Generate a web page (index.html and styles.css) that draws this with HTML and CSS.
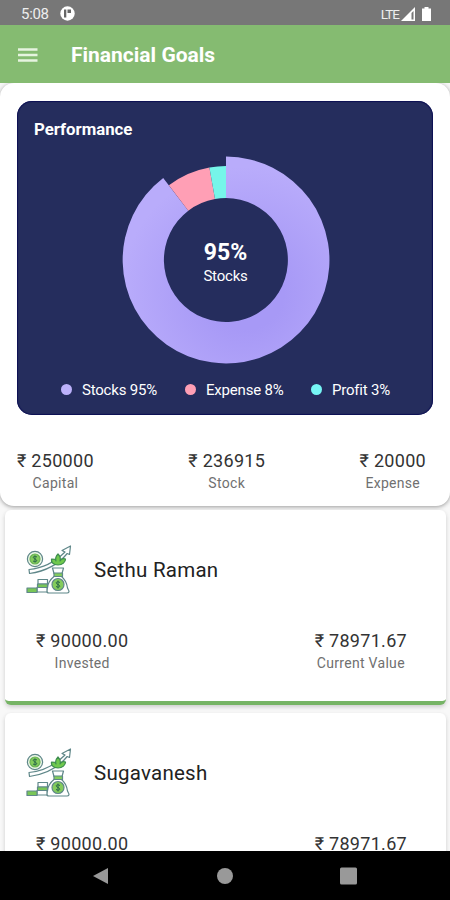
FILE: index.html
```html
<!DOCTYPE html>
<html lang="en">
<head>
<meta charset="utf-8">
<title>Financial Goals</title>
<link rel="stylesheet" href="styles.css">
</head>
<body>
<svg class="defs" width="0" height="0" aria-hidden="true">
  <symbol id="invest" viewBox="0 0 48 50">
    <g fill="none" stroke="#5f8789" stroke-width="1.200" stroke-linejoin="round">
      <circle cx="9" cy="14" r="7.600" fill="#edf8e8"/>
      <circle cx="9" cy="14" r="5" fill="#83cc5c" stroke="#69b256"/>
      <path d="M3 24.500C14 23.500 27 19 39 7l-3-1.500L44.500 1l-1 8.500-2.300-1C31 21 18 26.500 3.500 28.500z" fill="#fff"/>
      <path d="M32 20c-5 0-7-3-6.500-6 3 0 4 0 4.500 2-1-3 0-5 2-7 2 2 3 4 2 7 1-2 3-3 5.500-2 0 3-3 6-7.500 6z" fill="#70c94d" stroke="#3e8d50"/>
      <path d="M28 28.500l-1.500-5.500h11l-1.500 5.500z" fill="#fff"/>
      <path d="M28 28h8.500v3.500H28z" fill="#83cc5c"/>
      <path d="M28 31.500c-4 3-6.500 8-6.500 11l-1 3c0 2 1 2.500 2.500 2.500h18c2 0 2.500-1.500 1.500-3l-1-2c-.5-4-3-9-6-11.500z" fill="#fff"/>
      <circle cx="32" cy="39.500" r="6" fill="#83cc5c"/>
      <path d="M12 34.500h9.500V39H12z" fill="#fff"/>
      <path d="M11.500 39h10v3.500h-10z" fill="#79c657"/>
      <path d="M11 42.500h10V47H11z" fill="#fff"/>
      <path d="M1 43h10v4.500H1z" fill="#79c657"/>
    </g>
    <g fill="none" stroke="#286749" stroke-width="1">
      <path d="M11 12c-4-2-5 1-2 2s2 4-2 2M9 10.500v7M34 37.500c-4-2-5 1-2 2s2 4-2 2M32 35.500v8"/>
    </g>
  </symbol>
</svg>
<div class="phone">
  <header class="status">
    <span class="time">5:08</span>
    <svg class="app-dot" viewBox="0 0 15 15"><circle cx="7.500" cy="7.500" r="7.200" fill="#fff"/><path d="M4 3.500h2.300v8H4zM7.500 3.500H11v3.500H7.500z" fill="#666"/></svg>
    <span class="lte">LTE</span>
    <svg class="signal" viewBox="0 0 15 14"><path d="M0 14L14 0v14z" fill="#fff"/><path d="M10.500 6l2-2v8.500h-2z" fill="#777"/></svg>
    <svg class="battery" viewBox="0 0 9 14"><path d="M2.500 0h4v1.500H9V14H0V1.500h2.500z" fill="#fff"/></svg>
  </header>
  <div class="appbar">
    <svg class="menu" viewBox="0 0 20 14"><path d="M0 1.500h19.500M0 7h19.500M0 12.500h19.500" stroke="#e6f4df" stroke-width="2.600"/></svg>
    <h1>Financial Goals</h1>
  </div>
  <main class="content">
    <section class="summary">
      <div class="performance">
        <h2>Performance</h2>
        <div class="chart">
          <svg viewBox="-104 -104 208 208">
            <defs>
              <radialGradient id="violet" gradientUnits="userSpaceOnUse" cx="20" cy="32" r="125">
                <stop offset="0.300" stop-color="#a799f6"/><stop offset="1" stop-color="#b9acfb"/>
              </radialGradient>
            </defs>
            <path d="M0-103.400A103.400 103.400 0 1 1-62.800-82.100L-37.700-49.300A62 62 0 1 0 0-62z" fill="url(#violet)"/>
            <path d="M-57.100-74.700A94 94 0 0 1-16.600-92.500L-11-61A62 62 0 0 0-37.700-49.300z" fill="#ff9fb5"/>
            <path d="M-16.600-92.500A94 94 0 0 1 0-94V-62A62 62 0 0 0-11-61z" fill="#76f5e9"/>
          </svg>
          <div class="center"><strong>95%</strong><span>Stocks</span></div>
        </div>
        <ul class="legend">
          <li class="stocks">Stocks 95%</li>
          <li class="expense">Expense 8%</li>
          <li class="profit">Profit 3%</li>
        </ul>
      </div>
      <div class="totals">
        <div class="figure"><b>₹ 250000</b><span>Capital</span></div>
        <div class="figure"><b>₹ 236915</b><span>Stock</span></div>
        <div class="figure"><b>₹ 20000</b><span>Expense</span></div>
      </div>
    </section>
    <article class="goal">
      <div class="person"><svg class="invest"><use href="#invest"/></svg><h3>Sethu Raman</h3></div>
      <div class="amounts">
        <div class="figure"><b>₹ 90000.00</b><span>Invested</span></div>
        <div class="figure"><b>₹ 78971.67</b><span>Current Value</span></div>
      </div>
    </article>
    <article class="goal">
      <div class="person"><svg class="invest"><use href="#invest"/></svg><h3>Sugavanesh</h3></div>
      <div class="amounts">
        <div class="figure"><b>₹ 90000.00</b></div>
        <div class="figure"><b>₹ 78971.67</b></div>
      </div>
    </article>
  </main>
  <nav class="navbar">
    <svg viewBox="0 0 18 18"><path d="M1 9L16 1v16z"/></svg>
    <svg viewBox="0 0 18 18"><circle cx="9" cy="9" r="8"/></svg>
    <svg viewBox="0 0 18 18"><rect x="0" y="0.500" width="17" height="17" rx="1.500"/></svg>
  </nav>
</div>
</body>
</html>
```
FILE: styles.css
```css
* { box-sizing: border-box; margin: 0; padding: 0; }
body { font-family: Roboto, "Noto Sans", sans-serif; background: #fff; color: #222; }
.defs { position: absolute; }
.phone { width: 450px; height: 900px; display: flex; flex-direction: column; overflow: hidden; }

.status { height: 25px; flex: none; background: #777; color: #eee; display: flex; align-items: center; padding: 2px 19px 0 21px; }
.time { font-size: 15px; letter-spacing: -0.300px; width: 39px; }
.app-dot { width: 15px; height: 15px; }
.lte { margin-left: auto; font-size: 13.500px; letter-spacing: -1px; }
.signal { width: 15px; height: 14px; margin-left: 2px; }
.battery { width: 9px; height: 14px; margin-left: 6px; }

.appbar { height: 58px; flex: none; background: #85bb71; display: flex; align-items: center; padding: 2px 18px 0; }
.menu { width: 20px; height: 14px; margin-right: 33px; }
h1 { color: #fff; font-size: 21px; font-weight: 700; white-space: nowrap; }

.content { flex: 1; min-height: 0; overflow: hidden; background: #f8f8f8; }
.summary { height: 423px; background: #fff; border-radius: 14px; padding: 18px 17px 0; box-shadow: 0 1px 4px #999; }
.performance { height: 314px; width: 416px; background: #252d5d; border-radius: 15px; color: #fff; padding: 18px 16px 0 17px; box-shadow: inset 0 0 1px 1px #0c0f54; }
h2 { font-size: 16.800px; line-height: 20px; font-weight: 700; }
.chart { width: 208px; height: 208px; margin: 17px auto 0; display: grid; }
.chart > * { grid-area: 1 / 1; }
.center { place-self: center; display: flex; flex-direction: column; align-items: center; padding-top: 4px; }
.center strong { font-size: 23px; line-height: 27px; font-weight: 700; }
.center span { font-size: 15px; line-height: 20px; letter-spacing: -0.200px; }
.legend { display: grid; grid-template-columns: 124px 126px auto; list-style: none; margin: 15.500px 0 0 27px; font-size: 15px; line-height: 20px; letter-spacing: -0.200px; white-space: nowrap; }
.legend li { display: flex; align-items: center; gap: 10px; }
.legend li::before { content: ""; width: 11px; height: 11px; border-radius: 50%; background: #bcb1fb; }
.legend .expense::before { background: #ff9fb5; }
.legend .profit::before { background: #76f5f5; }

.totals { display: flex; justify-content: space-between; padding: 34px 7px 0 0; }
.figure { display: flex; flex-direction: column; align-items: center; white-space: nowrap; }
.figure b { font-size: 18px; line-height: 24px; font-weight: 400; letter-spacing: 0.300px; color: #333; }
.figure span { font-size: 14px; line-height: 20px; letter-spacing: 0.300px; color: #707070; }

.goal { height: 195px; margin: 4px 4px 8px 5px; background: #fff; border-radius: 6px; border-bottom: 4px solid #76b465; box-shadow: 0 2px 4px #ccc; padding-top: 35px; }
.person { display: flex; align-items: center; height: 50px; padding-left: 21px; }
.invest { width: 48px; height: 50px; margin-right: 20px; }
h3 { font-size: 20.500px; font-weight: 400; letter-spacing: 0.250px; color: #222; }
.amounts { display: flex; justify-content: space-between; padding: 34px 39px 0 31px; }

.navbar { height: 49px; flex: none; background: #000; display: grid; grid-template-columns: 18px 18px 18px; column-gap: 106px; justify-content: center; align-items: center; }
.navbar svg { width: 18px; height: 18px; fill: #999; }
```
